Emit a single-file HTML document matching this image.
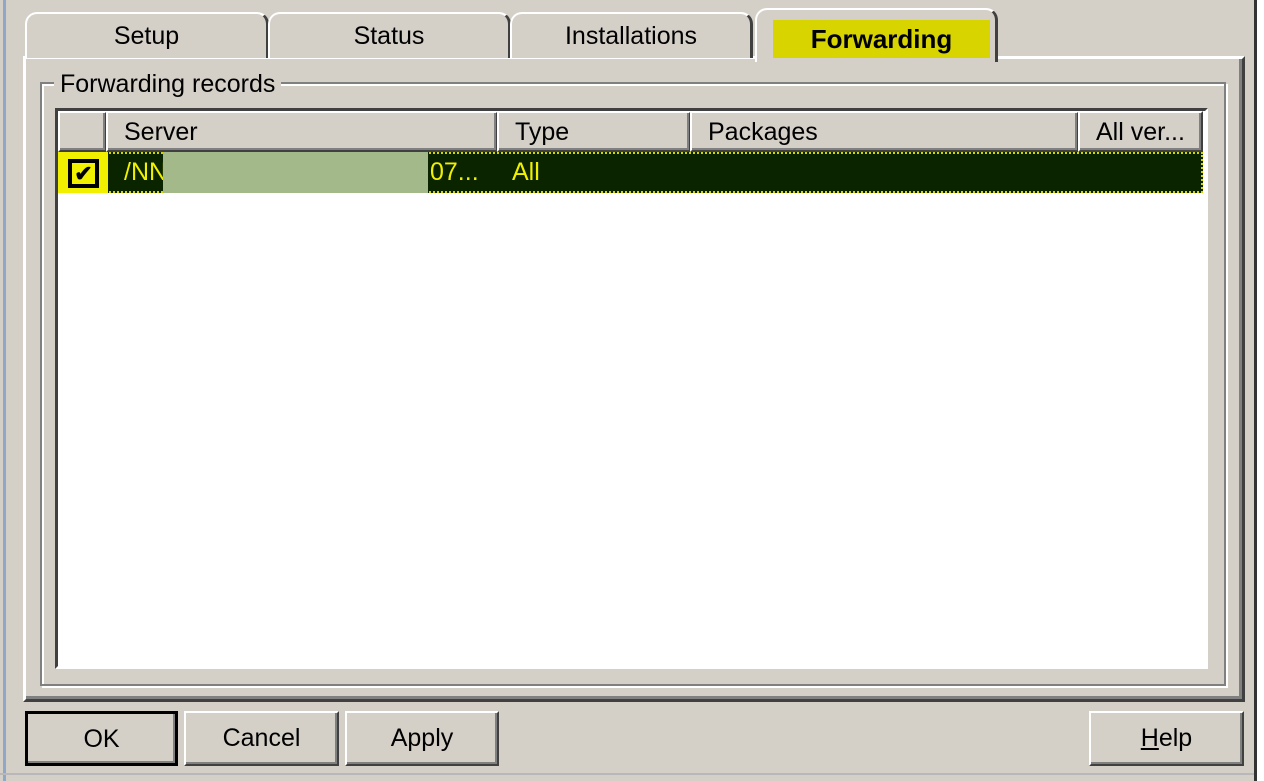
<!DOCTYPE html>
<html><head><style>
body{margin:0;width:1264px;height:781px;background:#d4d0c8;position:relative;overflow:hidden;font-family:"Liberation Sans",sans-serif;font-size:25px;color:#000}
.a{position:absolute;box-sizing:border-box}
.tab{border:2px solid #fff;border-right:3px solid #404040;border-bottom:none;border-radius:12px 12px 0 0;text-align:center;line-height:44px;background:#d4d0c8}
.btn{border:2px solid;border-color:#fff #404040 #404040 #fff;box-shadow:inset -2px -2px 0 #808080;text-align:center;line-height:50px;background:#d4d0c8}
.hd{border:2px solid;border-color:#fff #404040 #404040 #fff;box-shadow:inset -2px -2px 0 #808080;line-height:38px;padding-left:16px;background:#d4d0c8}
</style></head><body>
<div class="a" style="left:3px;top:0;width:3px;height:781px;background:#8fa8c8"></div>
<div class="a" style="left:1254px;top:0;width:10px;height:781px;background:#fff;border-left:3px solid #333"></div>
<!-- panel -->
<div class="a" style="left:23px;top:56px;width:1222px;height:646px;border:3px solid;border-color:#fff #404040 #404040 #fff;box-shadow:inset -3px -3px 0 #808080"></div>
<div class="a tab" style="left:25px;top:12px;width:244px;height:46px">Setup</div>
<div class="a tab" style="left:268px;top:12px;width:243px;height:46px">Status</div>
<div class="a tab" style="left:510px;top:12px;width:243px;height:46px">Installations</div>
<div class="a tab" style="left:755px;top:8px;width:243px;height:54px;border-bottom:none"></div>
<div class="a" style="left:773px;top:20px;width:217px;height:38px;background:#d8d400;text-align:center;line-height:38px;font-weight:bold;font-size:26px">Forwarding</div>
<!-- group -->
<div class="a" style="left:40px;top:82px;width:1186px;height:604px;border:2px solid #808080;box-shadow:inset 2px 2px 0 #fff,2px 2px 0 #fff"></div>
<div class="a" style="left:54px;top:70px;padding:0 6px;background:#d4d0c8;line-height:28px">Forwarding records</div>
<!-- list -->
<div class="a" style="left:55px;top:108px;width:1153px;height:561px;background:#fff;border:3px solid;border-color:#404040 #fff #fff #404040"></div>
<div class="a hd" style="left:58px;top:111px;width:49px;height:41px"></div>
<div class="a hd" style="left:106px;top:111px;width:392px;height:41px">Server</div>
<div class="a hd" style="left:497px;top:111px;width:194px;height:41px">Type</div>
<div class="a hd" style="left:690px;top:111px;width:389px;height:41px">Packages</div>
<div class="a hd" style="left:1078px;top:111px;width:125px;height:41px">All ver...</div>
<div class="a" style="left:58px;top:152px;width:1145px;height:41px;background:#0a2400;border:2px dotted #d8d400"></div>
<div class="a" style="left:58px;top:152px;width:50px;height:41px;background:#f0f000"></div>
<div class="a" style="left:68px;top:159px;width:31px;height:29px;background:#f0f000;border:4px solid #000;font-size:22px;line-height:21px;text-align:center;font-weight:bold">✔</div>
<div class="a" style="left:124px;top:152px;line-height:41px;color:#f0f000">/NN</div>
<div class="a" style="left:430px;top:152px;line-height:41px;color:#f0f000">07...</div>
<div class="a" style="left:512px;top:152px;line-height:41px;color:#f0f000">All</div>
<div class="a" style="left:163px;top:152px;width:265px;height:41px;background:#a3b98a"></div>
<!-- buttons -->
<div class="a btn" style="left:25px;top:711px;width:153px;height:55px;border:3px solid #000">OK</div>
<div class="a btn" style="left:184px;top:711px;width:155px;height:55px">Cancel</div>
<div class="a btn" style="left:345px;top:711px;width:154px;height:55px">Apply</div>
<div class="a btn" style="left:1089px;top:711px;width:155px;height:55px"><u>H</u>elp</div>
<div class="a" style="left:0;top:773px;width:1254px;height:2px;background:#b8b8b8"></div>
</body></html>
